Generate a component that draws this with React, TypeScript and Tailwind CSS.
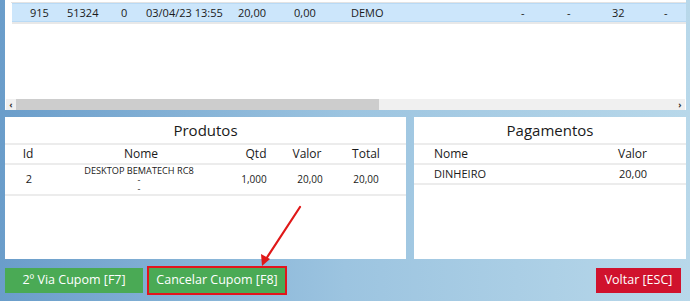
import React from "react";

const topCells: { w: number; t: string }[] = [
  { w: 18, t: "" },
  { w: 37, t: "915" },
  { w: 54, t: "51324" },
  { w: 25, t: "0" },
  { w: 92, t: "03/04/23 13:55" },
  { w: 56, t: "20,00" },
  { w: 57, t: "0,00" },
  { w: 170, t: "DEMO" },
  { w: 46, t: "-" },
  { w: 45, t: "-" },
  { w: 52, t: "32" },
  { w: 20, t: "-" },
];

export default function App() {
  return (
    <div
      className="relative w-[690px] h-[301px] overflow-hidden bg-gradient-to-r from-[#6a9dca] via-[#9cc4e0] to-[#b8d8ea] flex flex-col"
      style={{ fontFamily: '"Open Sans", "Noto Sans", sans-serif' }}
    >
      {/* Top grid */}
      <div className="ml-[5px] mr-[4px] h-[110px] bg-white flex flex-col">
        <div className="h-[3px] ml-[6px] border-b border-[#e3e3e3]" />
        <div className="ml-[7px] h-[19px] bg-[#cce6fb] border-y border-[#b9daf5] flex items-center text-[11px] text-[#1a1a1a] leading-none">
          {topCells.map((c, i) => (
            <div key={i} className="shrink-0" style={{ width: c.w }}>
              {c.t}
            </div>
          ))}
        </div>
        <div className="ml-[7px] h-[2px] bg-[#e8e8e8]" />
        <div className="flex-1" />
        <div className="h-[11px] mx-[1px] bg-[#f0f0f0] flex items-center">
          <div className="w-[10px] flex justify-center text-[9px] font-bold text-[#333] leading-none">‹</div>
          <div className="w-[363px] h-full bg-[#cdcdcd]" />
          <div className="flex-1" />
          <div className="w-[10px] flex justify-center text-[9px] font-bold text-[#333] leading-none">›</div>
        </div>
      </div>

      {/* Panels */}
      <div className="mt-[7px] ml-[5px] mr-[4px] h-[142px] flex gap-[8px]">
        <div className="w-[401px] bg-white flex flex-col">
          <div className="h-[26px] flex items-center justify-center text-[15px] text-[#1a1a1a]">Produtos</div>
          <div className="h-[2px] bg-[#ececec]" />
          <div className="h-[18px] flex items-center text-[12px] text-[#1a1a1a]">
            <div className="w-[46px] text-center">Id</div>
            <div className="w-[180px] text-center">Nome</div>
            <div className="w-[50px] text-center">Qtd</div>
            <div className="w-[52px] text-center">Valor</div>
            <div className="w-[66px] text-center">Total</div>
          </div>
          <div className="h-[2px] bg-[#ececec]" />
          <div className="h-[29px] flex items-center text-[10px] text-[#1a1a1a]">
            <div className="w-[48px] text-center text-[11px]">2</div>
            <div className="w-[172px] text-center flex flex-col text-[9.2px] leading-[9px]">
              <span>DESKTOP BEMATECH RC8</span>
              <span>-</span>
              <span>-</span>
            </div>
            <div className="w-[58px] text-center">1,000</div>
            <div className="w-[54px] text-center">20,00</div>
            <div className="w-[58px] text-center">20,00</div>
          </div>
          <div className="h-[2px] bg-[#ececec]" />
        </div>
        <div className="flex-1 bg-white flex flex-col">
          <div className="h-[26px] flex items-center justify-center text-[15px] text-[#1a1a1a]">Pagamentos</div>
          <div className="h-[2px] bg-[#ececec]" />
          <div className="h-[18px] flex items-center justify-between pl-[20px] pr-[39px] text-[12px] text-[#1a1a1a]">
            <span>Nome</span>
            <span>Valor</span>
          </div>
          <div className="h-[2px] bg-[#ececec]" />
          <div className="h-[18px] flex items-center justify-between pl-[20px] pr-[39px] text-[11px] text-[#1a1a1a]">
            <span>DINHEIRO</span>
            <span>20,00</span>
          </div>
          <div className="h-[2px] bg-[#ececec]" />
        </div>
      </div>

      {/* Buttons */}
      <div className="mt-[7px] ml-[5px] mr-[9px] flex items-center">
        <div className="w-[138px] h-[25px] bg-[#4aaa55] text-white text-[12.5px] flex items-center justify-center">
          2º Via Cupom [F7]
        </div>
        <div className="ml-[4px] w-[140px] h-[29px] border-2 border-[#e3141c] bg-[#4aaa55] text-white text-[12.5px] flex items-center justify-center">
          Cancelar Cupom [F8]
        </div>
        <div className="flex-1" />
        <div className="w-[85px] h-[25px] bg-[#d0122d] text-white text-[12.5px] flex items-center justify-center">
          Voltar [ESC]
        </div>
      </div>

      {/* Annotation arrow */}
      <svg className="absolute left-0 top-0 pointer-events-none" width="690" height="301">
        <line x1="300" y1="207" x2="266" y2="259" stroke="#e01818" strokeWidth="2.2" strokeLinecap="round" />
        <polygon points="262,266 261,254 270,259" fill="#e01818" />
      </svg>
    </div>
  );
}
